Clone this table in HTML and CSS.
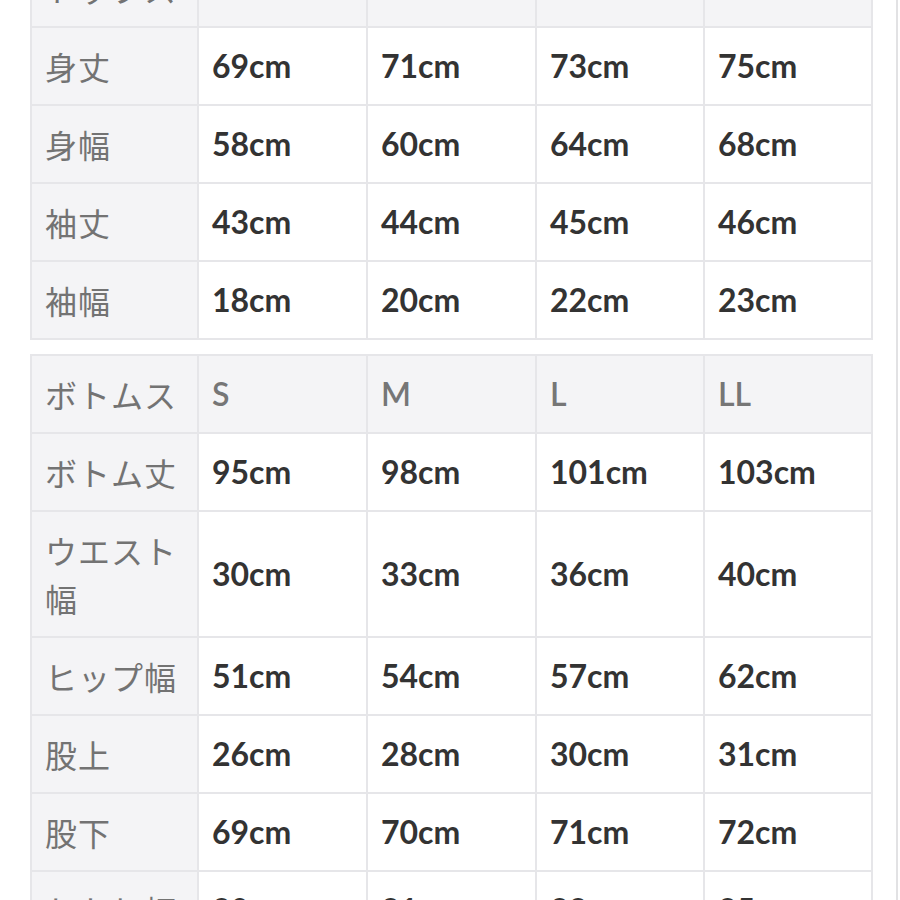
FILE: index.html
```html
<!DOCTYPE html>
<html lang="ja">
<head>
<meta charset="utf-8">
<link rel="stylesheet" href="styles.css">
</head>
<body>
<div class="page">
  <table class="size first">
    <colgroup><col class="c1"><col class="c2"><col class="c3"><col class="c4"><col class="c5"></colgroup>
    <tr class="head"><th>トップス</th><th>S</th><th>M</th><th>L</th><th>LL</th></tr>
    <tr><th>身丈</th><td>69cm</td><td>71cm</td><td>73cm</td><td>75cm</td></tr>
    <tr><th>身幅</th><td>58cm</td><td>60cm</td><td>64cm</td><td>68cm</td></tr>
    <tr><th>袖丈</th><td>43cm</td><td>44cm</td><td>45cm</td><td>46cm</td></tr>
    <tr><th>袖幅</th><td>18cm</td><td>20cm</td><td>22cm</td><td>23cm</td></tr>
  </table>
  <table class="size">
    <colgroup><col class="c1"><col class="c2"><col class="c3"><col class="c4"><col class="c5"></colgroup>
    <tr class="head"><th>ボトムス</th><th>S</th><th>M</th><th>L</th><th>LL</th></tr>
    <tr><th>ボトム丈</th><td>95cm</td><td>98cm</td><td>101cm</td><td>103cm</td></tr>
    <tr><th>ウエスト幅</th><td>30cm</td><td>33cm</td><td>36cm</td><td>40cm</td></tr>
    <tr><th>ヒップ幅</th><td>51cm</td><td>54cm</td><td>57cm</td><td>62cm</td></tr>
    <tr><th>股上</th><td>26cm</td><td>28cm</td><td>30cm</td><td>31cm</td></tr>
    <tr><th>股下</th><td>69cm</td><td>70cm</td><td>71cm</td><td>72cm</td></tr>
    <tr><th>わたり幅</th><td>30cm</td><td>31cm</td><td>33cm</td><td>35cm</td></tr>
  </table>
</div>
</body>
</html>
```

FILE: styles.css
```css
html, body {
  margin: 0;
  padding: 0;
  background: #ffffff;
  overflow: hidden;
}
body {
  width: 900px;
  height: 900px;
}
.page {
  width: 898px;
  height: 900px;
  border-right: 2px solid #e2e2e4;
  padding-left: 30px;
  box-sizing: border-box;
  overflow: hidden;
}
.size {
  border-collapse: collapse;
  table-layout: fixed;
  width: 841px;
  margin-bottom: 14px;
}
.size.first {
  margin-top: -52px;
}
.c1 { width: 167px; }
.c2 { width: 169px; }
.c3 { width: 169px; }
.c4 { width: 168px; }
.c5 { width: 168px; }
.size th, .size td {
  border: 2px solid #e6e6e9;
  padding: 14px 13px;
  height: 48px;
  line-height: 48px;
  text-align: left;
  vertical-align: middle;
  box-sizing: content-box;
}
.size th {
  background: #f4f4f6;
  color: #737373;
  font-family: "Noto Sans CJK JP", "Noto Sans", sans-serif;
  font-weight: 400;
  font-size: 32px;
  letter-spacing: 1px;
}
.size td {
  background: #ffffff;
  color: #333333;
  font-family: "Lato", "Noto Sans", sans-serif;
  font-weight: 700;
  font-size: 32px;
}
.size tr.head th + th {
  font-family: "Lato", "Noto Sans", sans-serif;
  font-weight: 600;
  color: #767676;
  font-size: 32px;
  letter-spacing: 0;
}
```
